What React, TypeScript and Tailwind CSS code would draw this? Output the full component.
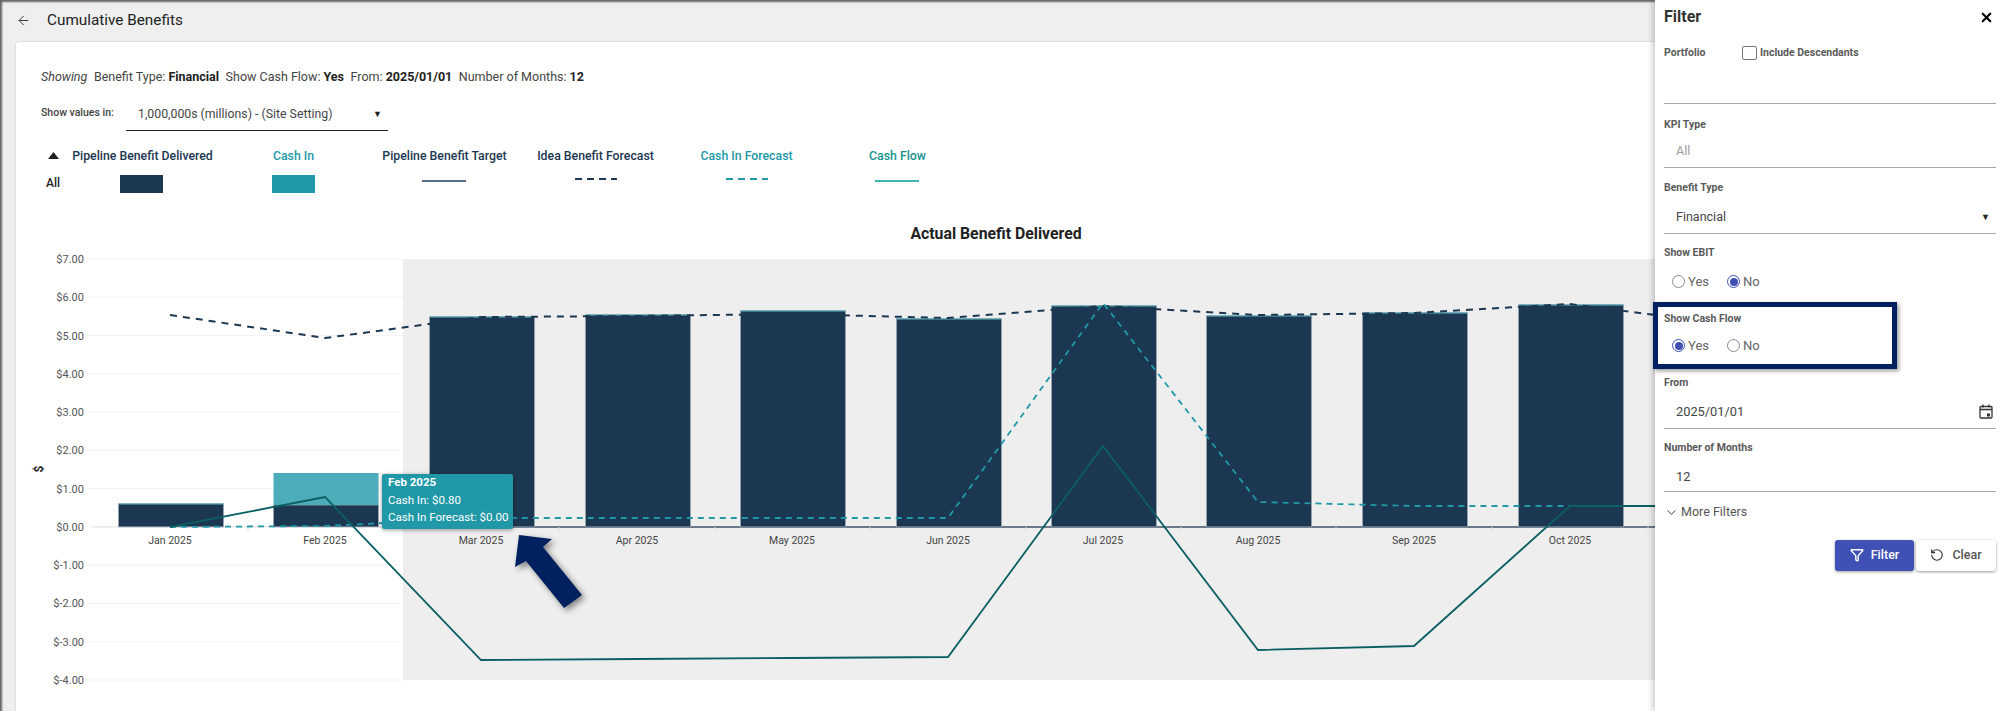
import type { ReactNode } from "react";
import { ArrowLeft, ChevronDown, Funnel, RotateCcw, X } from "lucide-react";

const PLOT_TOP = 259;
const UNIT = 38.27;
const ZERO = PLOT_TOP + 7 * UNIT;

const months = ["Jan", "Feb", "Mar", "Apr", "May", "Jun", "Jul", "Aug", "Sep", "Oct"];
const centers = [170, 325, 481, 637, 792, 948, 1103, 1258, 1414, 1570];
const barTops = [504, 505, 317, 315, 311, 319, 306, 316, 313, 305];
const yLabels = ["$7.00", "$6.00", "$5.00", "$4.00", "$3.00", "$2.00", "$1.00", "$0.00", "$-1.00", "$-2.00", "$-3.00", "$-4.00"];

const ideaForecast = "170,315 325,338 481,317 637,316 792,314 948,318 1103,306 1258,315 1414,313 1570,304 1725,324";
const cashForecast = "170,527 325,526 481,518 637,518 792,518 948,518 1103,303 1258,502 1414,506 1570,506 1725,506";
const cashFlow = "170,527 325,497 481,660 637,659 792,658 948,657 1103,446 1258,650 1414,646 1570,506 1725,506";

function Chart() {
  return (
    <div className="relative mt-[22px]">
      {/* viewBox keeps page coordinates for the data */}
      <svg width={1784} height={496} viewBox="16 215 1784 496" className="block font-['Roboto',sans-serif]">
        <text x={996} y={239} textAnchor="middle" fontSize={15.8} fontWeight={700} fill="#222">
          Actual Benefit Delivered
        </text>
        <rect x={403} y={PLOT_TOP} width={1300} height={421} fill="#eeeeee" />
        {yLabels.map((label, i) => (
          <g key={label}>
            <line x1={87} x2={403} y1={PLOT_TOP + i * UNIT} y2={PLOT_TOP + i * UNIT} stroke="#f3f3f3" />
            <text x={84} y={PLOT_TOP + i * UNIT + 4} textAnchor="end" fontSize={11} fill="#555">
              {label}
            </text>
          </g>
        ))}
        <text x={0} y={0} transform="translate(43 469) rotate(-90)" textAnchor="middle" fontSize={12} fontWeight={700} fill="#222">
          $
        </text>
        <line x1={92} x2={403} y1={ZERO} y2={ZERO} stroke="#e2e2e2" />
        <line x1={403} x2={1700} y1={ZERO} y2={ZERO} stroke="#3f5268" strokeWidth={1.5} />
        {centers.map((c, i) => (
          <g key={c}>
            <line x1={c + 78} x2={c + 78} y1={ZERO} y2={ZERO + 4} stroke="#dcdcdc" />
            <rect x={c - 51.5} y={barTops[i]} width={105} height={ZERO - barTops[i]} fill="#1c3751" stroke="#9aa6b2" strokeWidth={0.8} />
            {i !== 1 && <line x1={c - 51.5} x2={c + 53.5} y1={barTops[i]} y2={barTops[i]} stroke="#2f8f9f" strokeWidth={1} />}
            <text x={c} y={544} textAnchor="middle" fontSize={10.5} fill="#444">
              {months[i]} 2025
            </text>
          </g>
        ))}
        <rect x={273.5} y={473} width={105} height={32} fill="#4dacb9" />
        <polyline points={ideaForecast} fill="none" stroke="#1c3751" strokeWidth={2} strokeDasharray="7 6" />
        <polyline points={cashForecast} fill="none" stroke="#2098a8" strokeWidth={1.8} strokeDasharray="6 5" />
        <polyline points={cashFlow} fill="none" stroke="#0b5f63" strokeWidth={1.8} />
      </svg>

      <div className="absolute left-[366px] top-[259px] h-[55px] w-[131px] rounded-[2px] bg-[#2098a8] pl-[6px] text-[11.5px] leading-[17.5px] text-white shadow-[0_1px_4px_rgba(0,0,0,0.4)]">
        <div className="font-bold">Feb 2025</div>
        <div>Cash In: $0.80</div>
        <div>Cash In Forecast: $0.00</div>
      </div>

      {/* callout arrow */}
      <svg width={80} height={85} className="absolute left-[496px] top-[317px] drop-shadow-[3px_3px_3px_rgba(0,0,0,0.45)]">
        <polygon points="7,3 40,7 31,15 70,63 52,76 14,29 3,35" fill="#00205f" />
      </svg>
    </div>
  );
}

function Legend() {
  const head = "text-center text-[12.3px] leading-[18px] font-medium";
  const swatch = "mt-[10px] flex justify-center pr-[2px]";
  const line = "mt-[15px] flex justify-center pr-[2px]";
  const dash = "mt-[13px] flex justify-center";
  return (
    <div className="grid grid-cols-[26px_repeat(6,151px)] items-start">
      <svg width={11} height={7} className="ml-[7px] mt-[5px]">
        <polygon points="5.5,0 11,7 0,7" fill="#222" />
      </svg>
      <div className={`${head} text-[#1c3751]`}>Pipeline Benefit Delivered</div>
      <div className={`${head} text-[#2098a8]`}>Cash In</div>
      <div className={`${head} text-[#1c3751]`}>Pipeline Benefit Target</div>
      <div className={`${head} text-[#1c3751]`}>Idea Benefit Forecast</div>
      <div className={`${head} text-[#2098a8]`}>Cash In Forecast</div>
      <div className={`${head} text-[#14928f]`}>Cash Flow</div>

      <div className="mt-[10px] pl-[5px] text-[12px] font-medium leading-[17px] text-[#222]">All</div>
      <div className={swatch}><div className="h-[18px] w-[43px] bg-[#1c3751]" /></div>
      <div className="mt-[10px] flex justify-center"><div className="h-[18px] w-[43px] bg-[#2098a8]" /></div>
      <div className={line}><div className="h-[2px] w-[44px] bg-[#5a6f87]" /></div>
      <div className={dash}><div className="h-[2px] w-[42px] bg-[repeating-linear-gradient(90deg,#1c3751_0,#1c3751_7px,transparent_7px,transparent_12px)]" /></div>
      <div className={dash}><div className="h-[2px] w-[42px] bg-[repeating-linear-gradient(90deg,#2098a8_0,#2098a8_7px,transparent_7px,transparent_12px)]" /></div>
      <div className={line}><div className="h-[2px] w-[44px] bg-[#3fb6ae]" /></div>
    </div>
  );
}

function Field({ label, box, children }: { label: string; box: string; children?: ReactNode }) {
  return (
    <div className={box}>
      <div className="text-[10.5px] font-bold leading-[12px] text-[#5a5a5a]">{label}</div>
      {children}
    </div>
  );
}

function Radio({ label, on }: { label: string; on?: boolean }) {
  return (
    <div className="flex items-center gap-[3px]">
      <div className={`flex h-[13px] w-[13px] items-center justify-center rounded-full border ${on ? "border-[#3f51b5]" : "border-[#8a8a8a]"}`}>
        {on && <div className="h-[8px] w-[8px] rounded-full bg-[#3f51b5]" />}
      </div>
      <span className="text-[13px] text-[#666]">{label}</span>
    </div>
  );
}

function RadioRow({ yes, gap }: { yes: boolean; gap: string }) {
  return (
    <div className={`${gap} flex gap-[18px] pl-[8px]`}>
      <Radio label="Yes" on={yes} />
      <Radio label="No" on={!yes} />
    </div>
  );
}

function FilterPanel() {
  return (
    <div className="absolute right-0 top-0 h-full w-[345px] bg-white pl-[9px] pr-[4px] font-['Roboto',sans-serif] shadow-[-3px_0_5px_rgba(0,0,0,0.18)]">
      <div className="flex h-[34px] items-center justify-between pr-[2px]">
        <span className="text-[16px] font-bold text-[#333]">Filter</span>
        <X size={15} strokeWidth={3.5} className="text-black" />
      </div>

      <div className="h-[70px] border-b border-[#a8a8a8] pt-[12px]">
        <div className="flex items-center text-[10.5px] font-bold leading-[12px] text-[#5a5a5a]">
          <span className="w-[78px]">Portfolio</span>
          <div className="mr-[3px] h-[14px] w-[15px] rounded-[2px] border border-[#777]" />
          <span>Include Descendants</span>
        </div>
      </div>

      <Field label="KPI Type" box="h-[64px] border-b border-[#a8a8a8] pt-[15px]">
        <div className="mt-[11px] pl-[12px] text-[12.5px] text-[#a0a0a0]">All</div>
      </Field>

      <Field label="Benefit Type" box="h-[66px] border-b border-[#a8a8a8] pt-[14px]">
        <div className="mt-[14px] flex items-center justify-between pl-[12px] pr-[6px] text-[12.5px] text-[#444]">
          <span>Financial</span>
          <span className="text-[9px] text-[#222]">▼</span>
        </div>
      </Field>

      <Field label="Show EBIT" box="h-[66px] pt-[13px]">
        <RadioRow yes={false} gap="mt-[13px]" />
      </Field>

      <Field label="Show Cash Flow" box="h-[64px] pt-[13px]">
        <RadioRow yes gap="mt-[11px]" />
      </Field>

      <Field label="From" box="h-[65px] border-b border-[#a8a8a8] pt-[13px]">
        <div className="mt-[13px] flex items-center justify-between pl-[12px] pr-[3px] text-[12.8px] text-[#444]">
          <span>2025/01/01</span>
          <svg width="14" height="15" viewBox="0 0 14 15" fill="none" stroke="#333" strokeWidth="1.3">
            <rect x="1" y="2.5" width="12" height="11.5" rx="1" />
            <path d="M1 5.5h12M4 .5v3M10 .5v3" />
            <rect x="8" y="9.5" width="3" height="3" fill="#333" stroke="none" />
          </svg>
        </div>
      </Field>

      <Field label="Number of Months" box="h-[63px] border-b border-[#a8a8a8] pt-[13px]">
        <div className="mt-[13px] pl-[12px] text-[12.8px] text-[#444]">12</div>
      </Field>

      <div className="mt-[11px] flex items-center gap-[2px] text-[12.5px] text-[#555]">
        <ChevronDown size={15} strokeWidth={1.5} className="text-[#333]" />
        <span>More Filters</span>
      </div>

      <div className="mt-[18px] flex justify-end gap-[2px]">
        <button className="flex h-[31px] w-[79px] items-center justify-center gap-[7px] rounded-[3px] bg-[#3f51b5] text-[12.5px] font-medium text-white shadow-[0_1px_3px_rgba(0,0,0,0.4)]">
          <Funnel size={14} strokeWidth={2.5} />
          Filter
        </button>
        <button className="flex h-[31px] w-[80px] items-center justify-center gap-[8px] rounded-[3px] bg-white text-[12.5px] font-medium text-[#555] shadow-[0_1px_3px_rgba(0,0,0,0.4)]">
          <RotateCcw size={14} strokeWidth={2} className="text-[#333]" />
          Clear
        </button>
      </div>

      {/* highlight around Show Cash Flow */}
      <div className="absolute left-[-2px] top-[302px] h-[67px] w-[244px] border-[5px] border-[#00205f] shadow-[2px_2px_4px_rgba(0,0,0,0.4)]" />
    </div>
  );
}

export default function App() {
  return (
    <div className="relative h-[711px] w-[2000px] overflow-hidden bg-[#efefef] font-['Roboto',sans-serif] shadow-[inset_2px_2px_2px_#666]">
      <div className="flex h-[42px] items-center pb-[2px] pl-[16px]">
        <ArrowLeft size={15} strokeWidth={1.5} className="text-[#333]" />
        <span className="ml-[16px] text-[15.3px] text-[#222]">Cumulative Benefits</span>
      </div>

      <div className="ml-[16px] h-[669px] w-[1800px] rounded-t-[3px] bg-white pt-[28px] shadow-[0_0_2px_rgba(0,0,0,0.25)]">
        <div className="pl-[25px]">
          <div className="flex gap-[6.5px] text-[12.5px] leading-[14px] text-[#444]">
            <i>Showing</i>
            <span>Benefit Type: <b className="text-[#222]">Financial</b></span>
            <span>Show Cash Flow: <b className="text-[#222]">Yes</b></span>
            <span>From: <b className="text-[#222]">2025/01/01</b></span>
            <span>Number of Months: <b className="text-[#222]">12</b></span>
          </div>

          <div className="mt-[12px] flex items-start">
            <span className="mt-[11px] w-[85px] text-[10.5px] font-medium leading-[12px] text-[#444]">Show values in:</span>
            <div className="flex h-[35px] w-[262px] items-center justify-between border-b border-[#222] pl-[12px] pr-[6px] pt-[3px] text-[12.3px] text-[#444]">
              <span>1,000,000s (millions) - (Site Setting)</span>
              <span className="text-[9px] text-[#222]">▼</span>
            </div>
          </div>

          <div className="mt-[16px]">
            <Legend />
          </div>
        </div>

        <Chart />
      </div>

      <FilterPanel />
    </div>
  );
}
